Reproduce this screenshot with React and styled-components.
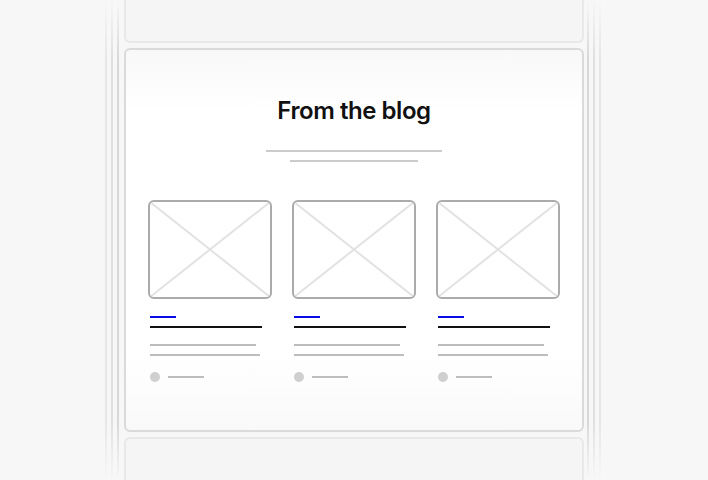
import React from "react";
import styled, { createGlobalStyle } from "styled-components";

const Global = createGlobalStyle`
  html, body { margin: 0; padding: 0; background: #f7f7f7; overflow: hidden; }
  body { font-family: Inter, "Noto Sans", sans-serif; }
`;

const Page = styled.div`
  width: 708px;
  height: 480px;
  display: flex;
  justify-content: flex-start;
  align-items: stretch;
  overflow: hidden;
  padding-left: 105px;
  box-sizing: border-box;
`;

const Rails = styled.div`
  display: flex;
  flex: none;
  gap: 4px;
  margin: ${(p) => (p.$side === "left" ? "0 5px 0 0" : "0 0 0 3px")};
  flex-direction: ${(p) => (p.$side === "left" ? "row" : "row-reverse")};
`;

const Rail = styled.div`
  width: 2px;
  height: 100%;
  background: linear-gradient(
    to bottom,
    rgba(0, 0, 0, 0) 0%,
    ${(p) => p.$c} 12%,
    ${(p) => p.$c} 88%,
    rgba(0, 0, 0, 0) 100%
  );
`;

const Column = styled.div`
  width: 460px;
  flex: none;
  display: flex;
  flex-direction: column;
  gap: 5px;
`;

const Stub = styled.div`
  flex: none;
  height: ${(p) => p.$h}px;
  box-sizing: border-box;
  background: #f5f5f5;
  border: 2px solid #e8e8e8;
  border-${(p) => (p.$top ? "top" : "bottom")}: none;
  border-radius: ${(p) => (p.$top ? "0 0 6px 6px" : "6px 6px 0 0")};
`;

const Card = styled.section`
  flex: none;
  height: 384px;
  box-sizing: border-box;
  border: 2px solid #dadada;
  border-radius: 6px;
  background: linear-gradient(
    to bottom,
    #f8f8f8 0%,
    #ffffff 16%,
    #ffffff 80%,
    #f9f9f9 100%
  );
  padding: 47px 22px 0;
  display: flex;
  flex-direction: column;
  align-items: center;
`;

const Title = styled.h2`
  margin: 0;
  font-family: Inter, "Noto Sans", sans-serif;
  font-weight: 600;
  font-size: 24px;
  line-height: 28px;
  letter-spacing: -0.45px;
  color: #111;
`;

const Bar = styled.div`
  width: ${(p) => p.$w}px;
  height: 2px;
  background: ${(p) => p.$c};
  margin-top: ${(p) => p.$mt || 0}px;
  flex: none;
`;

const Grid = styled.div`
  align-self: stretch;
  margin-top: 38px;
  display: grid;
  grid-template-columns: repeat(3, 124px);
  gap: 20px;
`;

const Post = styled.article`
  display: flex;
  flex-direction: column;
  align-items: flex-start;
`;

const Thumb = styled.div`
  width: 124px;
  height: 99px;
  box-sizing: border-box;
  border: 2px solid #ababab;
  border-radius: 6px;
  overflow: hidden;
  background: #fff;
  svg { display: block; width: 100%; height: 100%; }
`;

const Lines = styled.div`
  padding-left: 2px;
  display: flex;
  flex-direction: column;
`;

const Meta = styled.div`
  margin-top: 16px;
  display: flex;
  align-items: center;
  gap: 8px;
`;

const Dot = styled.div`
  width: 10px;
  height: 10px;
  border-radius: 50%;
  background: #cfcfcf;
`;

function PostCard() {
  return (
    <Post>
      <Thumb>
        <svg viewBox="0 0 120 95" preserveAspectRatio="none">
          <line x1="0" y1="0" x2="120" y2="95" stroke="#e2e2e2" strokeWidth="2" vectorEffect="non-scaling-stroke" />
          <line x1="120" y1="0" x2="0" y2="95" stroke="#e2e2e2" strokeWidth="2" vectorEffect="non-scaling-stroke" />
        </svg>
      </Thumb>
      <Lines>
        <Bar $w={26} $c="#0a0ae8" $mt={17} />
        <Bar $w={112} $c="#111" $mt={8} />
        <Bar $w={106} $c="#bdbdbd" $mt={16} />
        <Bar $w={110} $c="#bdbdbd" $mt={8} />
        <Meta>
          <Dot />
          <Bar $w={36} $c="#bdbdbd" />
        </Meta>
      </Lines>
    </Post>
  );
}

export default function App() {
  return (
    <>
      <Global />
      <Page>
        <Rails $side="left">
          <Rail $c="#e6e6e6" />
          <Rail $c="#e0e0e0" />
          <Rail $c="#d8d8d8" />
        </Rails>
        <Column>
          <Stub $top $h={43} />
          <Card>
            <Title>From the blog</Title>
            <Bar $w={176} $c="#cccccc" $mt={25} />
            <Bar $w={128} $c="#cccccc" $mt={8} />
            <Grid>
              <PostCard />
              <PostCard />
              <PostCard />
            </Grid>
          </Card>
          <Stub $h={60} />
        </Column>
        <Rails $side="right">
          <Rail $c="#e6e6e6" />
          <Rail $c="#e0e0e0" />
          <Rail $c="#d8d8d8" />
        </Rails>
      </Page>
    </>
  );
}
